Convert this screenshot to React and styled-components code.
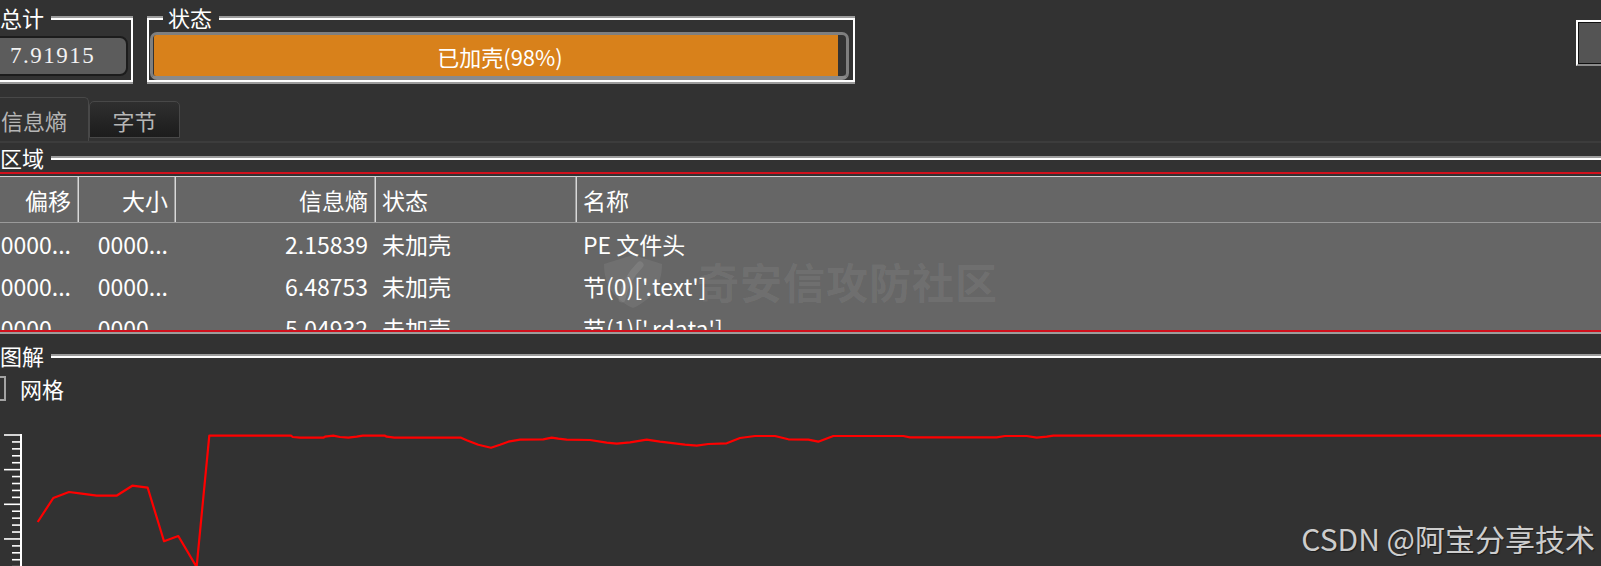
import React from 'react'
import styled, { createGlobalStyle } from 'styled-components'

const GlobalStyle = createGlobalStyle`
  html, body {
    margin: 0;
    padding: 0;
    background: #323232;
  }
  body {
    font-family: "Noto Sans CJK SC", "Noto Sans", sans-serif;
    color: #fff;
  }
`

const regions = [
    { id: 1, offset: '0000...', size: '0000...', entropy: '2.15839', state: '未加壳', name: 'PE 文件头' },
    { id: 2, offset: '0000...', size: '0000...', entropy: '6.48753', state: '未加壳', name: "节(0)['.text']" },
    { id: 3, offset: '0000...', size: '0000...', entropy: '5.04932', state: '未加壳', name: "节(1)['.rdata']" },
]

const curve = [
    [37.7, 524], [53.3, 500], [69, 494], [81.7, 495.7], [96.7, 497.7], [116.5, 497.7],
    [132.3, 487.7], [147.7, 489.7], [164, 543.3], [178.3, 538], [196.6, 569], [209.3, 437.7],
    [291, 437.7], [292.7, 439], [300, 439.7], [323.3, 439.7], [325, 438.7], [333.3, 437.7],
    [340, 439], [348.3, 439.7], [356.7, 438.7], [362.7, 437.7], [385, 437.7], [386.7, 438.7],
    [394.3, 439.7], [461, 439.7], [466.7, 442.3], [478.3, 446.7], [491, 449.7], [500, 446.7],
    [508.3, 443.7], [520, 441.7], [543.3, 441.3], [551.7, 439.7], [558.3, 440.7], [566.7, 441.7],
    [590, 442], [606.7, 444.7], [616.7, 445.7], [630, 444.3], [646.7, 441.7], [660, 443.7],
    [668.3, 444.7], [676.7, 445.7], [685, 446.7], [696.7, 447.7], [708.3, 446], [726.7, 445.3],
    [740, 440], [755, 438], [775, 438], [788.3, 441.3], [808.3, 441.7], [818.3, 443.7],
    [833.3, 438], [903.3, 438], [910, 439.3], [996.7, 439.3], [1005, 438], [1026.7, 438],
    [1036.7, 439.7], [1046.7, 438.7], [1053.3, 437.7], [1640, 437.7],
]

const packedPct = 98.8

const App = () => {
    const ticks = Array.from({ length: 20 }, (_, i) => i)

    return (
        <Screen>
            <GlobalStyle />
            <Canvas>
                <TopRow>
                    <Group $width='154px' $closed>
                        <Legend>总计</Legend>
                        <ValueBox>7.91915</ValueBox>
                    </Group>
                    <Group $width='708px' $closed $gap>
                        <Legend>状态</Legend>
                        <Progress>
                            <Chunk style={{ width: `${packedPct}%` }} />
                            <ProgressLabel>已加壳(98%)</ProgressLabel>
                        </Progress>
                    </Group>
                    <SideButton />
                </TopRow>

                <TabBar>
                    <Tab $active $w={110}>信息熵</Tab>
                    <Tab $w={91}>字节</Tab>
                </TabBar>

                <Pane>
                    <Group $bottom>
                        <Legend>区域</Legend>
                        <TableFrame>
                            <HeadRow>
                                <HeadCell $right>偏移</HeadCell>
                                <HeadCell $right>大小</HeadCell>
                                <HeadCell $right>信息熵</HeadCell>
                                <HeadCell>状态</HeadCell>
                                <HeadCell>名称</HeadCell>
                            </HeadRow>
                            <Body>
                                {regions.map(({ id, offset, size, entropy, state, name }) => (
                                    <Row key={id}>
                                        <Cell $right>{offset}</Cell>
                                        <Cell $right>{size}</Cell>
                                        <Cell $right>{entropy}</Cell>
                                        <Cell>{state}</Cell>
                                        <Cell>{name}</Cell>
                                    </Row>
                                ))}
                            </Body>
                            <Watermark>
                                <svg width='67' height='56' viewBox='0 0 67 56'>
                                    <path d='M33 2 L62 11 C62 33 51 47 33 55 C15 47 4 33 4 11 Z' fill='rgba(255,255,255,0.07)' />
                                    <path d='M40 12 C30 22 24 34 22 46' stroke='rgba(255,255,255,0.09)' strokeWidth='7' fill='none' strokeLinecap='round' />
                                </svg>
                                <span>奇安信攻防社区</span>
                            </Watermark>
                        </TableFrame>
                    </Group>

                    <Group $spaced>
                        <Legend>图解</Legend>
                        <CheckRow>
                            <CheckBox />
                            <CheckLabel>网格</CheckLabel>
                        </CheckRow>
                        <Chart width='1656' height='140' viewBox='-19 430 1656 140'>
                            <line x1='21' y1='436' x2='21' y2='580' stroke='#fff' strokeWidth='2' />
                            {ticks.map((i) => {
                                const y = 437 + i * 6.93
                                const major = i % 5 === 0
                                return <line key={i} x1={major ? 4 : 12} x2='21' y1={y} y2={y} stroke='#fff' strokeWidth='1.6' />
                            })}
                            <polyline
                                points={curve.map((p) => p.join(',')).join(' ')}
                                fill='none'
                                stroke='#ff0000'
                                strokeWidth='2.2'
                                strokeLinejoin='round'
                            />
                        </Chart>
                    </Group>
                </Pane>
            </Canvas>
            <Credit>CSDN @阿宝分享技术</Credit>
        </Screen>
    )
}

const Screen = styled.div`
    position: relative;
    width: 1601px;
    height: 566px;
    overflow: hidden;
    background: #323232;
`
const Canvas = styled.div`
    margin-left: -21px;
    width: 1660px;
`
const TopRow = styled.div`
    display: flex;
    align-items: flex-start;
    padding-top: 6px;
`
const Group = styled.fieldset`
    box-sizing: border-box;
    margin: 0;
    margin-left: ${(p) => (p.$gap ? '14px' : '0')};
    margin-top: ${(p) => (p.$spaced ? '10px' : '0')};
    padding: 0;
    min-width: 0;
    width: ${(p) => p.$width || 'auto'};
    border: 2px solid #fff;
    border-bottom: ${(p) => (p.$closed || p.$bottom ? '2px solid #fff' : 'none')};
    box-shadow: 0 -2px 0 #9c9c9c${(p) => (p.$closed ? ', 0 2px 0 #9c9c9c' : '')};
`
const Legend = styled.legend`
    margin-left: 14px;
    padding: 0 7px 4px 5px;
    font-size: 22px;
    line-height: 22px;
    color: #fff;
    background: #323232;
`
const ValueBox = styled.div`
    box-sizing: border-box;
    height: 40px;
    margin: 4px 3px 4px 2px;
    padding-right: 6px;
    border: 2px solid #1c1c1c;
    border-radius: 8px;
    background: #5c5c5c;
    display: flex;
    align-items: center;
    justify-content: center;
    font-family: "Liberation Serif", "DejaVu Serif", serif;
    font-size: 23px;
    letter-spacing: 1.5px;
    color: #f2f2f2;
`
const Progress = styled.div`
    box-sizing: border-box;
    height: 48px;
    margin: 0 4px 0 1px;
    padding-left: 1px;
    border: 3px solid #7f7f7f;
    border-bottom: 4px solid #8a8a8a;
    border-radius: 7px;
    background: #323232;
    display: grid;
`
const Chunk = styled.div`
    grid-area: 1 / 1;
    justify-self: start;
    background: #d8811b;
    border-radius: 2px 0 0 2px;
`
const ProgressLabel = styled.span`
    grid-area: 1 / 1;
    place-self: center;
    font-size: 22px;
    color: #fff;
`
const SideButton = styled.div`
    box-sizing: border-box;
    width: 60px;
    height: 46px;
    margin: 14px 3px 0 auto;
    border: 2px solid #fff;
    border-bottom: 2px solid #8c8c8c;
    box-shadow: inset 0 0 0 1px #111;
    background: #545454;
`
const TabBar = styled.div`
    display: flex;
    align-items: flex-end;
    height: 44px;
    margin-top: 15px;
`
const Tab = styled.div`
    box-sizing: border-box;
    width: ${(p) => p.$w}px;
    height: ${(p) => (p.$active ? 44 : 37)}px;
    margin-bottom: ${(p) => (p.$active ? 0 : 3)}px;
    border: 1px solid #484848;
    border-bottom: ${(p) => (p.$active ? 'none' : '1px solid #484848')};
    border-radius: 5px 5px 0 0;
    background: ${(p) => (p.$active ? '#323232' : 'linear-gradient(#2f2f2f, #1c1c1c)')};
    color: #b5b5b5;
    font-size: 22px;
    display: flex;
    align-items: center;
    justify-content: center;
`
const Pane = styled.div`
    border-top: 2px solid #3c3c3c;
    padding-top: 3px;
    height: 480px;
`
const TableFrame = styled.div`
    position: relative;
    box-sizing: border-box;
    height: 160px;
    padding-top: 2px;
    border-top: 2px solid #d0101c;
    border-bottom: 2px solid #d0101c;
    box-shadow: 0 2px 0 #9c9c9c;
    overflow: hidden;
`
const columns = '97px 97px 200px 201px 1fr'
const HeadRow = styled.div`
    box-sizing: border-box;
    display: grid;
    grid-template-columns: ${columns};
    height: 47px;
    background: #666;
    border-top: 1px solid #cfcfcf;
    border-bottom: 1px solid #9a9a9a;
`
const HeadCell = styled.div`
    display: flex;
    align-items: center;
    justify-content: ${(p) => (p.$right ? 'flex-end' : 'flex-start')};
    padding: 0 6px;
    border-left: 1px solid #d8d8d8;
    border-right: 1px solid #9e9e9e;
    font-size: 23px;
    color: #fff;
`
const Body = styled.div`
    height: 107px;
    background: #666;
    overflow: hidden;
`
const Row = styled.div`
    display: grid;
    grid-template-columns: ${columns};
    height: 42px;
`
const Cell = styled.div`
    display: flex;
    align-items: center;
    justify-content: ${(p) => (p.$right ? 'flex-end' : 'flex-start')};
    padding: 0 7px;
    font-size: 23px;
    color: #fff;
    white-space: nowrap;
    overflow: hidden;
`
const Watermark = styled.div`
    position: absolute;
    left: 619px;
    top: 76px;
    display: flex;
    align-items: center;
    gap: 30px;
    pointer-events: none;
    span {
        font-size: 42px;
        font-weight: 700;
        letter-spacing: 1px;
        color: rgba(255, 255, 255, 0.08);
    }
`
const CheckRow = styled.div`
    display: flex;
    align-items: center;
    height: 28px;
    margin-top: 4px;
`
const CheckBox = styled.div`
    box-sizing: border-box;
    width: 25px;
    height: 25px;
    border: 2px solid #a3a3a3;
`
const CheckLabel = styled.span`
    margin-left: 14px;
    font-size: 22px;
    color: #fff;
`
const Chart = styled.svg`
    display: block;
    margin-top: 26px;
`
const Credit = styled.div`
    position: absolute;
    right: 6px;
    top: 519px;
    font-size: 30px;
    line-height: 38px;
    color: #cdcdcd;
    text-shadow: 1px 1px 1px rgba(0, 0, 0, 0.45);
`

export default App
